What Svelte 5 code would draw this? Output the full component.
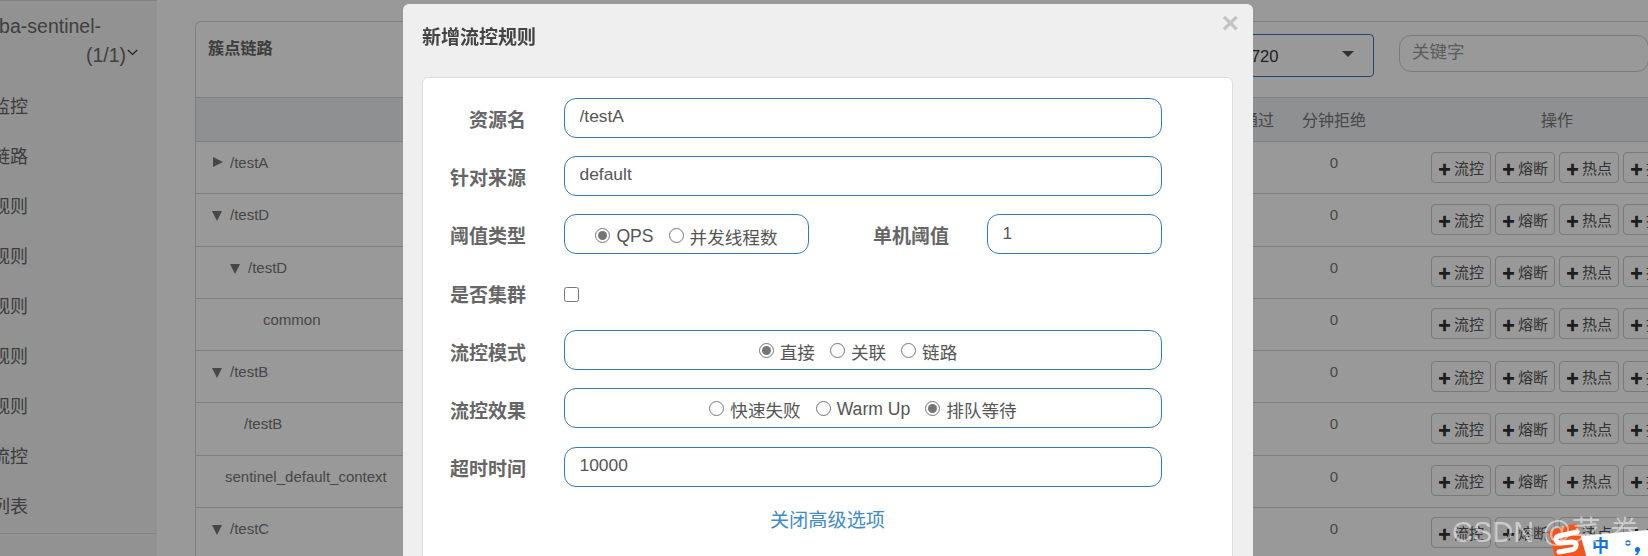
<script>
	const menu = ['实时监控', '簇点链路', '流控规则', '熔断规则', '热点规则', '系统规则', '授权规则', '集群流控', '机器列表'];
	const rows = [
		{ name: '/testA', pad: 34, arrow: 'right' },
		{ name: '/testD', pad: 34, arrow: 'down' },
		{ name: '/testD', pad: 52, arrow: 'down' },
		{ name: 'common', pad: 67 },
		{ name: '/testB', pad: 34, arrow: 'down' },
		{ name: '/testB', pad: 48 },
		{ name: 'sentinel_default_context', pad: 29 },
		{ name: '/testC', pad: 34, arrow: 'down' }
	];
	const actions = ['流控', '熔断', '热点', '授权'];
</script>

<div class="page">
	<aside class="sidebar">
		<div class="sidebar-inner">
			<div class="app-name">
				<span class="app-title">spring-cloud-alibaba-sentinel-</span>
				<span class="count">(1/1)<svg class="chevron" width="11" height="7" viewBox="0 0 11 7" fill="none" stroke="#333" stroke-width="1.2"><path d="M.8 1l4.7 4.4L10.2 1" /></svg></span>
			</div>
			<nav class="menu">
				{#each menu as item}
					<div class="menu-item">{item}</div>
				{/each}
			</nav>
		</div>
		<div class="sidebar-line"></div>
	</aside>

	<main class="main">
		<section class="card">
			<header class="card-head">
				<h3>簇点链路</h3>
				<div class="filters">
					<div class="machine-select">
						<span>192.168.1.1:8720</span>
						<i class="caret"></i>
					</div>
					<input class="search" type="text" placeholder="关键字" />
				</div>
			</header>
			<div class="row thead">
				<div class="col-name"></div>
				<div class="col-num">通过</div>
				<div class="col-num">分钟拒绝</div>
				<div class="col-ops">操作</div>
			</div>
			{#each rows as row}
				<div class="row">
					<div class="col-name cell" style="padding-left: {row.pad}px">
						{#if row.arrow}
							<i class="tree-arrow {row.arrow}"></i>
						{/if}
						{row.name}
					</div>
					<div class="col-num cell"></div>
					<div class="col-num cell">0</div>
					<div class="col-ops ops">
						{#each actions as action}
							<button class="op-btn"><span class="plus">✚</span>{action}</button>
						{/each}
					</div>
				</div>
			{/each}
		</section>
	</main>
</div>

<div class="backdrop"></div>

<div class="modal">
	<div class="modal-head">
		<h4>新增流控规则</h4>
		<span class="close">×</span>
	</div>
	<form class="panel">
		<div class="field">
			<span class="label">资源名</span>
			<input class="control" type="text" value="/testA" />
		</div>
		<div class="field">
			<span class="label">针对来源</span>
			<input class="control" type="text" value="default" />
		</div>
		<div class="field">
			<span class="label">阈值类型</span>
			<div class="control group narrow">
				<label><input type="radio" name="grade" checked />QPS</label>
				<label><input type="radio" name="grade" />并发线程数</label>
			</div>
			<span class="label second">单机阈值</span>
			<input class="control small" type="text" value="1" />
		</div>
		<div class="field">
			<span class="label">是否集群</span>
			<input class="check" type="checkbox" />
		</div>
		<div class="field">
			<span class="label">流控模式</span>
			<div class="control group shifted">
				<label><input type="radio" name="mode" checked />直接</label>
				<label><input type="radio" name="mode" />关联</label>
				<label><input type="radio" name="mode" />链路</label>
			</div>
		</div>
		<div class="field">
			<span class="label">流控效果</span>
			<div class="control group">
				<label><input type="radio" name="effect" />快速失败</label>
				<label><input type="radio" name="effect" />Warm Up</label>
				<label><input type="radio" name="effect" checked />排队等待</label>
			</div>
		</div>
		<div class="field">
			<span class="label">超时时间</span>
			<input class="control" type="text" value="10000" />
		</div>
		<div class="toggle"><span class="toggle-link">关闭高级选项</span></div>
	</form>
</div>

<div class="ime">
	<span class="ime-zh">中</span>
	<svg class="ime-punct" width="18" height="18" viewBox="0 0 18 18" fill="#1273d8">
		<circle cx="3" cy="3" r="2" fill="none" stroke="#1273d8" stroke-width="1.5" />
		<path d="M10 9.5a2.6 2.6 0 1 1 4 2.2c-.3 1.9-1.5 3.2-3.4 3.8l-.5-1c1-.5 1.6-1.1 1.8-2a2.6 2.6 0 0 1-1.9-3z" />
	</svg>
</div>

<svg class="ime-logo" width="40" height="34" viewBox="0 0 40 34">
	<path d="M1 8 L27 1 Q30 0 31 3 L39 32 L39 34 L8 34 Z" fill="#f0561d" />
	<path d="M30 9 L12 13 Q8 14 9 17 Q10 20 14 20 L25 19 Q30 19 29 23 Q28 27 23 27 L12 29" fill="none" stroke="#fff" stroke-width="5" stroke-linecap="round" stroke-linejoin="round" />
</svg>

<div class="watermark">CSDN @菜-卷</div>

<style>
	:global(body) {
		margin: 0;
		background: #fff;
		overflow: hidden;
		font-family: 'Liberation Sans', 'Noto Sans CJK SC', sans-serif;
		color: #333;
	}

	.page {
		display: flex;
		width: 1648px;
		height: 556px;
		overflow: hidden;
	}

	.sidebar {
		width: 157px;
		flex-shrink: 0;
		background: #f3f3f4;
		border-top: 1px solid #d8d8d8;
		box-sizing: border-box;
		overflow: hidden;
	}

	/* the page is scrolled sideways, so the left part of the menu is cut off */
	.sidebar-inner {
		width: 300px;
		margin-left: -143px;
	}

	.app-name {
		display: flex;
		flex-direction: column;
		align-items: flex-end;
		width: 281px;
		padding-top: 11px;
		font-size: 19.5px;
		line-height: 29px;
		color: #6b6b6b;
		height: 59px;
	}

	.app-title {
		margin-right: 37px;
		white-space: nowrap;
	}

	.count {
		white-space: nowrap;
	}

	.chevron {
		vertical-align: 6px;
		margin-left: 1px;
	}

	.menu {
		padding-top: 11px;
	}

	.menu-item {
		height: 50px;
		line-height: 50px;
		padding-left: 99px;
		font-size: 18px;
		color: #666;
		white-space: nowrap;
	}

	.sidebar-line {
		height: 1px;
		background: #dcdcdc;
		margin-top: 1px;
	}

	.main {
		flex: 1;
		min-width: 0;
		padding: 21px 0 0 38px;
		background: #fff;
	}

	.card {
		width: 1560px;
		border: 1px solid #d5d5d5;
		border-radius: 6px 0 0 0;
	}

	.card-head {
		display: flex;
		justify-content: space-between;
		height: 75px;
		box-sizing: border-box;
	}

	h3 {
		margin: 16px 0 0 12px;
		font-size: 16.2px;
		line-height: 20px;
		font-weight: 700;
		color: #666;
	}

	.filters {
		display: flex;
		align-items: flex-start;
		gap: 25px;
		padding: 12px 0 0 0;
		margin-right: 107px;
	}

	.machine-select {
		display: flex;
		align-items: center;
		justify-content: space-between;
		width: 300px;
		height: 43px;
		box-sizing: border-box;
		border: 1px solid #3d79b5;
		border-radius: 4px;
		padding: 2px 19px 0 75px;
		font-size: 16.5px;
		color: #333;
	}

	.caret {
		width: 0;
		height: 0;
		border-left: 6px solid transparent;
		border-right: 6px solid transparent;
		border-top: 6px solid #555;
		margin-top: -5px;
	}

	.search {
		width: 250px;
		height: 37px;
		box-sizing: border-box;
		margin-top: 1px;
		border: 1px solid #ccc;
		border-radius: 12px;
		padding: 0 12px 2px;
		font: 17.5px 'Liberation Sans', 'Noto Sans CJK SC', sans-serif;
		background: #fff;
		outline: none;
	}

	.search::placeholder {
		color: #999;
	}

	.row {
		display: flex;
		height: 52.25px;
		box-sizing: border-box;
		border-top: 1px solid #d5d5d5;
	}

	.thead {
		height: 44px;
		background: #eef0f3;
		align-items: center;
		padding-bottom: 2px;
		font-size: 16px;
		color: #777;
	}

	.col-name {
		width: 1024px;
		flex-shrink: 0;
		box-sizing: border-box;
	}

	.col-num {
		width: 76px;
		flex-shrink: 0;
		text-align: center;
	}

	.col-ops {
		width: 370px;
		flex-shrink: 0;
		text-align: center;
	}

	.cell {
		padding-top: 11px;
		font-size: 15px;
		line-height: 20px;
		color: #777;
	}

	.tree-arrow {
		display: inline-block;
		position: absolute;
		margin-left: -18px;
		width: 0;
		height: 0;
	}

	.tree-arrow.right {
		margin-top: 4px;
		margin-left: -17px;
		border-top: 5.5px solid transparent;
		border-bottom: 5.5px solid transparent;
		border-left: 10px solid #777;
	}

	.tree-arrow.down {
		margin-top: 6px;
		border-left: 5.5px solid transparent;
		border-right: 5.5px solid transparent;
		border-top: 10px solid #777;
	}

	.ops {
		display: flex;
		justify-content: center;
		gap: 4px;
		padding-top: 9.5px;
	}

	.op-btn {
		width: 60px;
		height: 31px;
		box-sizing: border-box;
		border: 1px solid #ccc;
		border-radius: 4px;
		background: #fff;
		padding: 0;
		font: 15px 'Liberation Sans', 'Noto Sans CJK SC', sans-serif;
		color: #555;
		white-space: nowrap;
	}

	.plus {
		font-size: 13px;
		color: #333;
		margin-right: 3px;
	}

	.backdrop {
		position: fixed;
		inset: 0;
		background: rgb(0 0 0 / 0.4);
	}

	.modal {
		position: fixed;
		top: 4px;
		left: 403px;
		width: 850px;
		height: 700px;
		background: #efefef;
		border-radius: 6px;
	}

	.modal-head {
		position: relative;
		height: 73px;
		box-sizing: border-box;
		padding: 23px 0 0 19px;
	}

	h4 {
		margin: 0;
		font-size: 19px;
		line-height: 22px;
		font-weight: 700;
		color: #444;
	}

	.close {
		position: absolute;
		top: 3px;
		right: 14px;
		font-size: 30px;
		line-height: 32px;
		font-weight: 700;
		color: #c4c4c4;
	}

	.panel {
		margin: 0 20px 0 19px;
		padding-top: 19.5px;
		height: 600px;
		box-sizing: border-box;
		background: #fff;
		border: 1px solid #ddd;
		border-radius: 6px;
		display: flex;
		flex-direction: column;
		gap: 18.2px;
	}

	.field {
		display: flex;
		align-items: center;
		height: 40px;
	}

	.label {
		width: 103px;
		flex-shrink: 0;
		text-align: right;
		margin-right: 38px;
		font-size: 19px;
		font-weight: 700;
		color: #666;
		padding-top: 2px;
	}

	.label.second {
		width: 77px;
		margin-left: 63px;
	}

	.control {
		width: 598px;
		height: 40px;
		box-sizing: border-box;
		border: 1px solid #337ab7;
		border-radius: 12px;
		padding: 0 14.5px 3px;
		background: #fff;
		font: 17.4px 'Liberation Sans', 'Noto Sans CJK SC', sans-serif;
		color: #555;
		outline: none;
	}

	.control.small {
		width: 175px;
		padding-bottom: 0;
	}

	.group {
		display: flex;
		align-items: center;
		justify-content: center;
		gap: 15px;
		padding: 3px 0 0;
	}

	.group.narrow {
		width: 245px;
		padding-top: 6px;
	}

	.group.shifted {
		padding-right: 10px;
	}

	.group label {
		display: flex;
		align-items: center;
		gap: 6px;
		white-space: nowrap;
		font-size: 17.6px;
		color: #555;
	}

	.group input {
		width: 15px;
		height: 15px;
		margin: -3px 0 0;
		accent-color: #757575;
	}

	.check {
		width: 15px;
		height: 15px;
		margin: 5px 0 0;
	}

	.toggle {
		text-align: center;
		margin-top: 2px;
		font-size: 19.2px;
		line-height: 28px;
		color: #428bca;
	}

	.watermark {
		position: fixed;
		left: 1452px;
		top: 514px;
		font-size: 29px;
		line-height: 36px;
		white-space: nowrap;
		color: rgb(255 255 255 / 0.5);
	}

	.ime {
		position: fixed;
		left: 1560px;
		top: 530px;
		width: 88px;
		height: 26px;
		background: #fff;
		clip-path: polygon(0 8px, 100% 0, 100% 100%, 0 100%);
	}

	.ime-logo {
		position: fixed;
		left: 1547px;
		top: 523px;
	}

	.ime-zh {
		position: absolute;
		left: 32px;
		top: 6px;
		font-size: 17px;
		line-height: 22px;
		font-weight: 700;
		color: #1273d8;
	}

	.ime-punct {
		position: absolute;
		left: 65px;
		top: 10px;
	}
</style>
